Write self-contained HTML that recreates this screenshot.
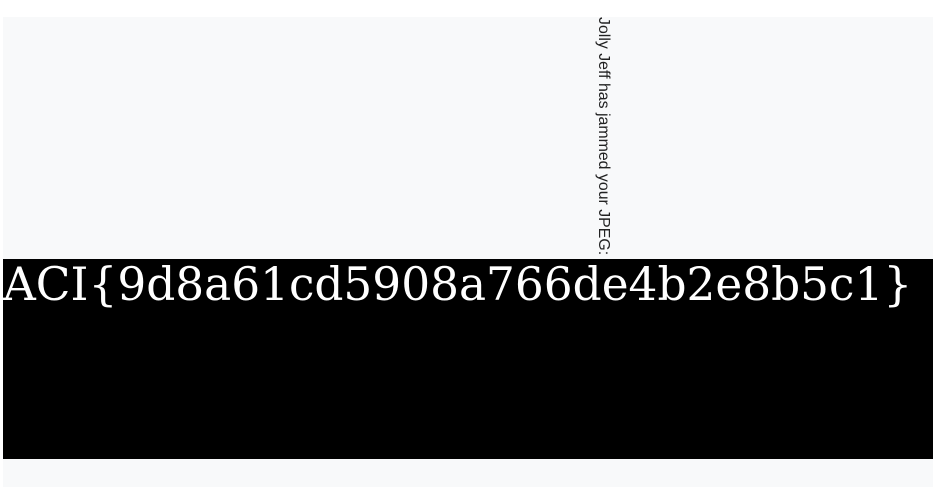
<!DOCTYPE html>
<html><head><style>
html,body{margin:0;padding:0;background:#fff;width:933px;height:487px;overflow:hidden}
.box{position:absolute;left:3px;top:17px;width:930px;height:470px;background:#f8f9fa}
.band{position:absolute;left:3px;top:259px;width:930px;height:200px;background:#000}
.flag{position:absolute;left:3px;top:259px;color:#fff;font-family:"DejaVu Serif",serif;font-size:45.4px;line-height:52px;white-space:nowrap}
.v{position:absolute;left:594px;top:17px;writing-mode:vertical-rl;font-family:"Liberation Sans",sans-serif;font-size:15.9px;color:#222;white-space:nowrap;line-height:18px}
</style></head><body>
<div class="box"></div>
<div class="band"></div>
<div class="flag">ACI{9d8a61cd5908a766de4b2e8b5c1}</div>
<div class="v">Jolly Jeff has jammed your JPEG:</div>
</body></html>
